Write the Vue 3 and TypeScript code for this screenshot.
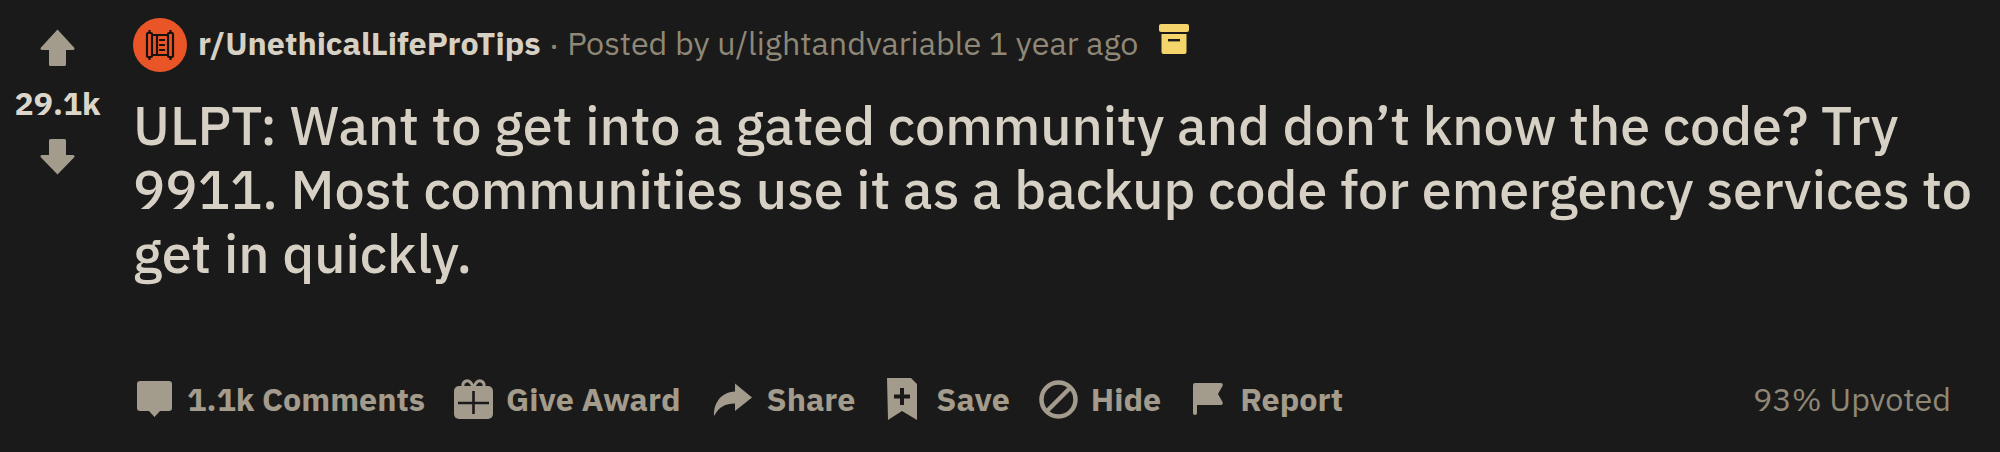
<script setup lang="ts">
const title =
  'ULPT: Want to get into a gated community and don’t know the code? Try 9911. Most communities use it as a backup code for emergency services to get in quickly.';
</script>

<template>
  <div class="post">
    <div class="votes">
      <svg class="arrow" width="35" height="37" viewBox="0 0 35 37"><path d="M17.5 0.5 L34.5 19 Q35 21 33 21 H26 V35.5 Q26 37 24.5 37 H10.5 Q9 37 9 35.5 V21 H2 Q0 21 0.5 19 Z" /></svg>
      <span class="score">29.1k</span>
      <svg class="arrow" width="35" height="36" viewBox="0 0 35 36"><path d="M17.5 35.5 L0.5 18 Q0 16 2 16 H9 V1.5 Q9 0 10.5 0 H24.5 Q26 0 26 1.5 V16 H33 Q35 16 34.5 18 Z" /></svg>
    </div>
    <div class="main">
      <div class="meta">
        <svg class="sub-icon" width="54" height="54" viewBox="0 0 54 54">
          <circle cx="27" cy="27" r="27" fill="#ea5527" />
          <g fill="none" stroke="#14110f" stroke-width="2.2">
            <rect x="14" y="15" width="5" height="24" rx="1" />
            <rect x="35" y="15" width="5" height="24" rx="1" />
            <path d="M16.5 12v3M16.5 39v3M37.5 12v3M37.500 39v3M19 17h16M19 37h16M24 18v18M26 22h6M26 27h6M26 32h6" />
          </g>
        </svg>
        <span class="sub">r/UnethicalLifeProTips</span>
        <span class="dot">·</span>
        <span class="posted">Posted by u/lightandvariable 1 year ago</span>
        <svg class="archive" width="30" height="30" viewBox="0 0 30 30">
          <rect x="0" y="0" width="30" height="8" rx="2" fill="#f5d56b" />
          <path d="M2.5 10h25v18a2 2 0 0 1-2 2h-21a2 2 0 0 1-2-2z" fill="#f5d56b" />
          <rect x="9" y="15" width="12" height="2.4" fill="#1a1a1a" />
        </svg>
      </div>
      <h1 class="title">{{ title }}</h1>
      <div class="bar">
        <div class="actions">
          <span class="action comments">
            <svg width="35" height="36" viewBox="0 0 35 36"><path d="M3 0h29a3 3 0 0 1 3 3v24a3 3 0 0 1-3 3h-9l-5.5 6-5.500-6H3a3 3 0 0 1-3-3V3a3 3 0 0 1 3-3z" /></svg>
            1.1k Comments
          </span>
          <span class="action award">
            <svg width="39" height="40" viewBox="0 0 39 40">
              <path d="M5 7h29a5 5 0 0 1 5 5v23a5 5 0 0 1-5 5H5a5 5 0 0 1-5-5V12a5 5 0 0 1 5-5z" />
              <path d="M9 8c-1-6 5-8 8-4l2.500 4 2.500-4c3-4 9-2 8 4" fill="none" stroke="#a39b8c" stroke-width="3" />
              <path d="M4 24h31M19.500 12v23" fill="none" stroke="#1a1a1a" stroke-width="2.600" />
            </svg>
            Give Award
          </span>
          <span class="action share">
            <svg width="39" height="33" viewBox="0 0 39 33"><path d="M22 0.5L39 14.500 22 28v-7.500C12 20.500 6 24 1 33 0 22 7 9 22 8.500z" /></svg>
            Share
          </span>
          <span class="action save">
            <svg width="30" height="42" viewBox="0 0 30 42"><path fill-rule="evenodd" d="M0 0h24l6 6v36L15 33 1 42zM13 10v6.500H7v4h6V27h4v-6.500h6v-4h-6V10z" /></svg>
            Save
          </span>
          <span class="action hide">
            <svg width="39" height="39" viewBox="0 0 39 39"><circle cx="19.500" cy="19.500" r="17" fill="none" stroke="#a39b8c" stroke-width="4.500" /><path d="M8 31L31 8" stroke="#a39b8c" stroke-width="4.500" /></svg>
            Hide
          </span>
          <span class="action report">
            <svg width="30" height="32" viewBox="0 0 30 32"><path d="M2 0h26a2 2 0 0 1 1.500 3L25 11l4.500 8a2 2 0 0 1-1.500 3H4v8a2 2 0 0 1-4 0V2a2 2 0 0 1 2-2z" /></svg>
            Report
          </span>
        </div>
        <span class="ratio">93% Upvoted</span>
      </div>
    </div>
  </div>
</template>

<style scoped>
.post {
  display: flex;
  width: 2000px;
  height: 452px;
  background: #1a1a1a;
  color: #d7d0c4;
  font-family: "IBM Plex Sans", "Noto Sans", sans-serif;
  overflow: hidden;
}

.votes {
  display: flex;
  flex-direction: column;
  align-items: center;
  width: 115px;
  flex: none;
  padding-top: 29px;
  box-sizing: border-box;
}

.arrow {
  fill: #a39b8c;
}

.score {
  font-size: 32px;
  line-height: 40px;
  font-weight: 700;
  margin: 17px 0 16px;
  color: #dcd6ca;
}

.main {
  flex: 1;
  display: flex;
  flex-direction: column;
  padding: 18px 49px 0 18px;
  min-width: 0;
}

.meta {
  display: flex;
  align-items: center;
  height: 54px;
  font-size: 32.3px;
  line-height: 44px;
}

.meta span {
  margin-bottom: 4px;
}

.sub-icon {
  margin-right: 11px;
}

.sub {
  font-weight: 700;
}

.meta .dot {
  margin: 0 8px;
  color: #8f8877;
}

.posted {
  color: #8f8877;
}

.archive {
  margin-left: 21px;
  margin-top: -12px;
}

.title {
  margin: 21px 0 0;
  font-size: 53.9px;
  line-height: 64px;
  font-weight: 500;
  width: 1860px;
}

.bar {
  display: flex;
  justify-content: space-between;
  align-items: center;
  height: 48px;
  margin-top: 90px;
  color: #a39b8c;
  font-size: 32.3px;
}

.actions {
  display: flex;
  align-items: center;
  gap: 32px;
  margin-left: 4px;
}

.action {
  display: flex;
  align-items: center;
  gap: 15px;
  font-weight: 700;
}

.action svg {
  fill: #a39b8c;
  flex: none;
}

.comments {
  margin-right: -3px;
}

.award {
  gap: 13px;
}

.save {
  gap: 19px;
  margin-right: -3px;
}

.hide {
  gap: 13px;
}

.report {
  gap: 17px;
}

.ratio {
  color: #8f8877;
  font-weight: 400;
}
</style>

<style>
html,
body {
  margin: 0;
  background: #1a1a1a;
}
</style>
